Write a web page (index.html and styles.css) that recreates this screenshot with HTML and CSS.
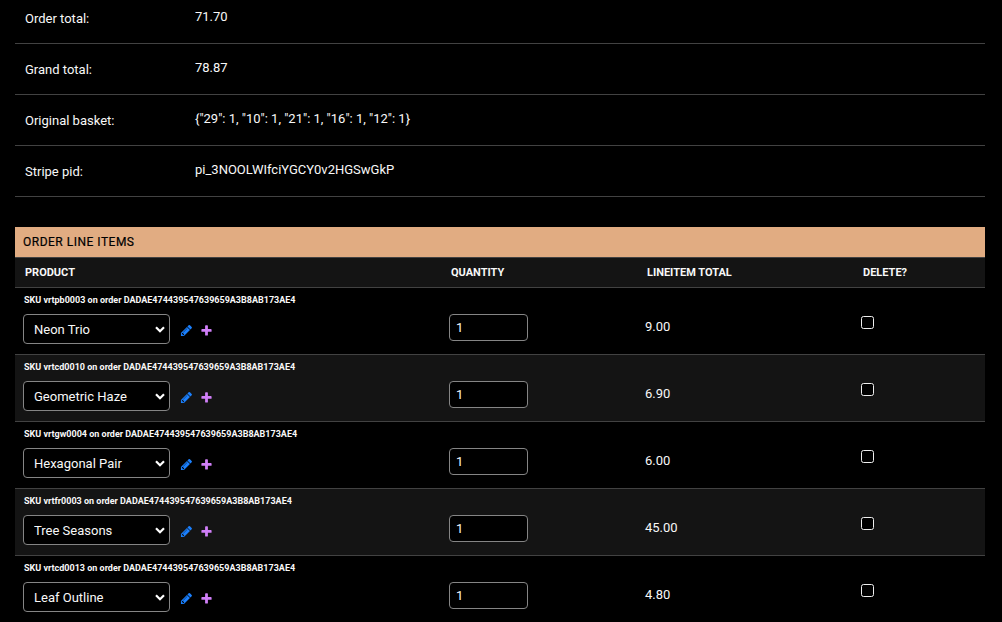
FILE: index.html
```html
<!DOCTYPE html>
<html lang="en">
<head>
<meta charset="utf-8">
<title>Change order</title>
<link rel="stylesheet" href="styles.css">
</head>
<body>
<svg class="sprite" aria-hidden="true">
  <symbol id="pencil" viewBox="0 0 1792 1792"><path d="M491 1536l91-91-235-235-91 91v107h128v128h107zm523-928q0-22-22-22-10 0-17 7l-542 542q-7 7-7 17 0 22 22 22 10 0 17-7l542-542q7-7 7-17zm-54-192l416 416-832 832h-416v-416zm683 96q0 53-37 90l-166 166-416-416 166-165q36-38 90-38 53 0 91 38l235 234q37 39 37 91z"/></symbol>
  <symbol id="plus" viewBox="0 0 1792 1792"><path d="M1600 796v192q0 40-28 68t-68 28h-416v416q0 40-28 68t-68 28h-192q-40 0-68-28t-28-68v-416h-416q-40 0-68-28t-28-68v-192q0-40 28-68t68-28h416v-416q0-40 28-68t68-28h192q40 0 68 28t28 68v416h416q40 0 68 28t28 68z"/></symbol>
  <symbol id="chevron" viewBox="0 0 10 7"><path d="M1 1.2l4 4 4-4" fill="none" stroke="#fff" stroke-width="2.2"/></symbol>
</svg>
<main class="content">
  <dl class="fields">
    <div class="field field-first"><dt>Order total:</dt><dd>71.70</dd></div>
    <div class="field"><dt>Grand total:</dt><dd>78.87</dd></div>
    <div class="field"><dt>Original basket:</dt><dd>{"29": 1, "10": 1, "21": 1, "16": 1, "12": 1}</dd></div>
    <div class="field"><dt>Stripe pid:</dt><dd>pi_3NOOLWIfciYGCY0v2HGSwGkP</dd></div>
  </dl>
  <section class="inline-group">
    <h2 class="title">Order line items</h2>
    <div class="row head"><span>Product</span><span>Quantity</span><span>Lineitem total</span><span>Delete?</span></div>
    <div class="row item">
      <div><p class="sku">SKU vrtpb0003 on order DADAE474439547639659A3B8AB173AE4</p><div class="related"><div class="picker"><select class="product"><option>Neon Trio</option></select><svg class="chevron"><use href="#chevron"/></svg></div><svg class="icon edit"><use href="#pencil"/></svg><svg class="icon add"><use href="#plus"/></svg></div></div>
      <div class="cell"><input class="qty" type="text" value="1"></div><div class="cell total">9.00</div><div class="cell"><input class="check" type="checkbox"></div>
    </div>
    <div class="row item alt">
      <div><p class="sku">SKU vrtcd0010 on order DADAE474439547639659A3B8AB173AE4</p><div class="related"><div class="picker"><select class="product"><option>Geometric Haze</option></select><svg class="chevron"><use href="#chevron"/></svg></div><svg class="icon edit"><use href="#pencil"/></svg><svg class="icon add"><use href="#plus"/></svg></div></div>
      <div class="cell"><input class="qty" type="text" value="1"></div><div class="cell total">6.90</div><div class="cell"><input class="check" type="checkbox"></div>
    </div>
    <div class="row item">
      <div><p class="sku">SKU vrtgw0004 on order DADAE474439547639659A3B8AB173AE4</p><div class="related"><div class="picker"><select class="product"><option>Hexagonal Pair</option></select><svg class="chevron"><use href="#chevron"/></svg></div><svg class="icon edit"><use href="#pencil"/></svg><svg class="icon add"><use href="#plus"/></svg></div></div>
      <div class="cell"><input class="qty" type="text" value="1"></div><div class="cell total">6.00</div><div class="cell"><input class="check" type="checkbox"></div>
    </div>
    <div class="row item alt">
      <div><p class="sku">SKU vrtfr0003 on order DADAE474439547639659A3B8AB173AE4</p><div class="related"><div class="picker"><select class="product"><option>Tree Seasons</option></select><svg class="chevron"><use href="#chevron"/></svg></div><svg class="icon edit"><use href="#pencil"/></svg><svg class="icon add"><use href="#plus"/></svg></div></div>
      <div class="cell"><input class="qty" type="text" value="1"></div><div class="cell total">45.00</div><div class="cell"><input class="check" type="checkbox"></div>
    </div>
    <div class="row item">
      <div><p class="sku">SKU vrtcd0013 on order DADAE474439547639659A3B8AB173AE4</p><div class="related"><div class="picker"><select class="product"><option>Leaf Outline</option></select><svg class="chevron"><use href="#chevron"/></svg></div><svg class="icon edit"><use href="#pencil"/></svg><svg class="icon add"><use href="#plus"/></svg></div></div>
      <div class="cell"><input class="qty" type="text" value="1"></div><div class="cell total">4.80</div><div class="cell"><input class="check" type="checkbox"></div>
    </div>
  </section>
</main>
</body>
</html>
```
FILE: styles.css
```css
* { box-sizing: border-box; }
html { background: #000; overflow: hidden; }
body {
  margin: 0;
  height: 622px;
  overflow: hidden;
  background: #000;
  color: #f8f8f8;
  font: 13px/17px Roboto, sans-serif;
}
.sprite { display: none; }
.content { padding: 0 17px 0 15px; }

.fields { margin: 0; }
.field {
  display: flex;
  height: 51px;
  padding: 17px 10px 0;
  border-bottom: 1px solid #424242;
}
.field-first { height: 44px; padding-top: 10px; }
.field dt { width: 170px; }
.field dd { margin: -2px 0 0; }

.inline-group { margin-top: 30px; }
.title {
  margin: 0;
  height: 30px;
  padding: 0 8px;
  background: #e1ac82;
  color: #000;
  font-size: 12px;
  font-weight: 400;
  line-height: 31px;
  letter-spacing: 0.5px;
  text-transform: uppercase;
  -webkit-text-stroke: 0.2px #000;
}
.row {
  display: grid;
  grid-template-columns: 426px 196px 216px 1fr;
  padding: 0 8px;
  border-bottom: 1px solid #424242;
}
.head {
  height: 31px;
  padding: 0 10px;
  border-top: 1px solid #424242;
  background: #141414;
  font-size: 11px;
  font-weight: 700;
  line-height: 30px;
  text-transform: uppercase;
}
.item { height: 67px; }
.alt { background: #141414; }
.sku {
  margin: 5px 0 7px 1px;
  font-size: 9px;
  font-weight: 700;
  line-height: 14px;
}
.related { display: flex; align-items: flex-start; }
.picker { position: relative; margin-right: 10px; }
.product {
  appearance: none;
  display: block;
  width: 147px;
  height: 30px;
  margin: 0;
  padding: 0 10px;
  border: 1px solid #858585;
  border-radius: 4px;
  background: #000;
  color: #f8f8f8;
  font: 13px Roboto, sans-serif;
}
.chevron {
  position: absolute;
  top: 12px;
  right: 5px;
  width: 10px;
  height: 7px;
  pointer-events: none;
}
.icon { width: 13px; height: 13px; margin: 10px 7px 0 0; }
.edit { fill: #1a80ff; }
.add { fill: #d07ff8; }
.cell { padding-top: 26px; }
.total { padding-top: 30px; }
.qty {
  display: block;
  width: 79px;
  height: 27px;
  margin: 0;
  padding: 0 6px;
  border: 1px solid #858585;
  border-radius: 4px;
  background: #000;
  color: #f8f8f8;
  font: 13px Roboto, sans-serif;
}
.check {
  appearance: none;
  display: block;
  width: 13px;
  height: 13px;
  margin: 2px 0 0;
  border: 1px solid #eee;
  border-radius: 2.5px;
  background: #000;
}
```
